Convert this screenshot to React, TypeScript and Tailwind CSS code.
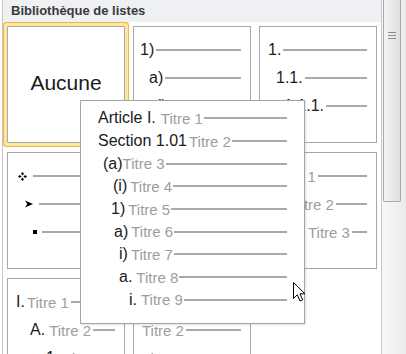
import React from "react";

type Row = { pl: number; label?: string; gap?: number; title?: string };

function Line() {
  return <div className="flex-1 h-[2px] bg-[#a9a9a9] ml-[2px]" />;
}

function ListRow({ pl, label, gap = 3, title }: Row) {
  return (
    <div className="flex items-center h-[28px] whitespace-nowrap" style={{ paddingLeft: pl }}>
      {label && <span className="text-[16px] leading-none text-[#1b1b1b]">{label}</span>}
      {title && (
        <span className="text-[15px] leading-none text-[#9d9d9d]" style={{ marginLeft: label ? gap : 0 }}>
          {title}
        </span>
      )}
      <Line />
    </div>
  );
}

function Tile({ rows }: { rows: Row[] }) {
  return (
    <div className="h-[117px] border border-[#a8a8a8] bg-white overflow-hidden pt-[9px] pr-[9px]">
      {rows.map((r, i) => (
        <ListRow key={i} {...r} />
      ))}
    </div>
  );
}

// ❖ ➤ ▪ drawn so their size matches the thumbnail
function Diamonds() {
  return (
    <svg width="9" height="9" viewBox="0 0 9 9">
      <path d="M4.5 0 L6 1.8 L4.5 3.6 L3 1.8 Z M4.5 5.4 L6 7.2 L4.5 9 L3 7.2 Z M0 4.5 L1.8 3 L3.6 4.5 L1.8 6 Z M5.4 4.5 L7.2 3 L9 4.5 L7.2 6 Z" fill="#000" />
    </svg>
  );
}

function Arrow() {
  return (
    <svg width="8" height="8" viewBox="0 0 8 8">
      <path d="M0 0.5 L8 4 L0 7.5 L2.3 4 Z" fill="#000" />
    </svg>
  );
}

function Square() {
  return <div className="w-[4px] h-[4px] bg-black" />;
}

function BulletTile() {
  const items = [
    { pl: 10, icon: <Diamonds />, w: 13 },
    { pl: 17, icon: <Arrow />, w: 12 },
    { pl: 25, icon: <Square />, w: 7 },
  ];
  return (
    <div className="h-[117px] border border-[#a8a8a8] bg-white overflow-hidden pt-[9px] pr-[9px]">
      {items.map((b, i) => (
        <div key={i} className="flex items-center h-[28px]" style={{ paddingLeft: b.pl }}>
          <span className="inline-flex items-center" style={{ width: b.w }}>
            {b.icon}
          </span>
          <Line />
        </div>
      ))}
    </div>
  );
}

const popupRows = [
  { pl: 17, label: "Article I.", gap: 5, title: "Titre 1" },
  { pl: 17, label: "Section 1.01", gap: 2, title: "Titre 2" },
  { pl: 22, label: "(a)", gap: 0, title: "Titre 3" },
  { pl: 32, label: "(i)", gap: 3, title: "Titre 4" },
  { pl: 30, label: "1)", gap: 3, title: "Titre 5" },
  { pl: 33, label: "a)", gap: 3, title: "Titre 6" },
  { pl: 38, label: "i)", gap: 3, title: "Titre 7" },
  { pl: 38, label: "a.", gap: 4, title: "Titre 8" },
  { pl: 48, label: "i.", gap: 4, title: "Titre 9" },
];

function Cursor() {
  return (
    <svg className="absolute left-[293px] top-[282px]" width="14" height="21" viewBox="0 0 14 21">
      <path
        d="M0.5 0.5 L0.5 16.5 L4.3 12.8 L7 19 L9.6 17.9 L7 11.8 L12 11.8 Z"
        fill="#fff"
        stroke="#000"
        strokeWidth="1"
        strokeLinejoin="miter"
      />
    </svg>
  );
}

export default function App() {
  return (
    <div className="relative w-[406px] h-[354px] overflow-hidden bg-white flex font-['Liberation_Sans',Arial,sans-serif]">
      <div className="w-[2px] bg-white" />
      <div className="w-[379px] flex flex-col border-l border-[#c6c6c6]">
        <div className="h-[22px] shrink-0 bg-[#eef0f3] pl-[8px] flex items-center text-[13px] font-bold text-[#3a3a3a]">
          Bibliothèque de listes
        </div>
        <div className="pl-[4px] pt-[4px] grid grid-cols-[118px_118px_118px] gap-x-[8px] gap-y-[9px] auto-rows-[117px]">
          <div className="h-[117px] border border-[#a8a8a8] bg-white flex items-center justify-center shadow-[0_0_0_3px_#fde6a2,0_0_0_4px_#eeb642] rounded-[1px]">
            <span className="text-[21px] text-[#1b1b1b] mt-[-4px]">Aucune</span>
          </div>
          <Tile
            rows={[
              { pl: 6, label: "1)" },
              { pl: 15, label: "a)" },
              { pl: 24, label: "i)" },
            ]}
          />
          <Tile
            rows={[
              { pl: 8, label: "1." },
              { pl: 16, label: "1.1." },
              { pl: 24, label: "1.1.1." },
            ]}
          />
          <BulletTile />
          <Tile
            rows={[
              { pl: 8, label: "Article I.", title: "Titre 1" },
              { pl: 8, label: "Section 1.01", title: "Titre 2" },
              { pl: 14, label: "(a)", title: "Titre 3" },
            ]}
          />
          <Tile
            rows={[
              { pl: 14, title: "Titre 1" },
              { pl: 32, title: "Titre 2" },
              { pl: 48, title: "Titre 3" },
            ]}
          />
          <Tile
            rows={[
              { pl: 8, label: "I.", gap: 2, title: "Titre 1" },
              { pl: 22, label: "A.", gap: 4, title: "Titre 2" },
              { pl: 38, label: "1.", gap: 4, title: "Titre 3" },
            ]}
          />
          <Tile
            rows={[
              { pl: 8, title: "Titre 1" },
              { pl: 8, title: "Titre 2" },
              { pl: 8, title: "Titre 3" },
            ]}
          />
        </div>
      </div>
      <div className="w-[25px] h-full border-l border-[#c9c9c9] bg-gradient-to-r from-[#f7f7f7] to-[#ebebeb] flex">
        <div className="w-[18px] h-[202px] ml-[1px] border border-t-0 border-[#a9a9a9] rounded-b-[2px] bg-gradient-to-r from-[#f4f4f4] to-[#dedede] flex flex-col items-center pt-[32px] gap-[2px]">
          <div className="w-[8px] h-[1px] bg-[#8c8c8c]" />
          <div className="w-[8px] h-[1px] bg-[#8c8c8c]" />
          <div className="w-[8px] h-[1px] bg-[#8c8c8c]" />
        </div>
      </div>

      <div className="absolute left-[80px] top-[100px] w-[225px] h-[224px] bg-white border border-[#a4a4a4] shadow-[1px_1px_2px_rgba(0,0,0,0.12)] pt-[6px] pr-[17px]">
        {popupRows.map((r, i) => (
          <div key={i} className="flex items-center h-[22.7px] whitespace-nowrap" style={{ paddingLeft: r.pl }}>
            <span className="text-[16px] leading-none text-[#1b1b1b]">{r.label}</span>
            <span className="text-[15px] leading-none text-[#9d9d9d]" style={{ marginLeft: r.gap }}>
              {r.title}
            </span>
            <div className="flex-1 h-[2px] bg-[#a9a9a9] ml-[1px]" />
          </div>
        ))}
      </div>
      <Cursor />
    </div>
  );
}
